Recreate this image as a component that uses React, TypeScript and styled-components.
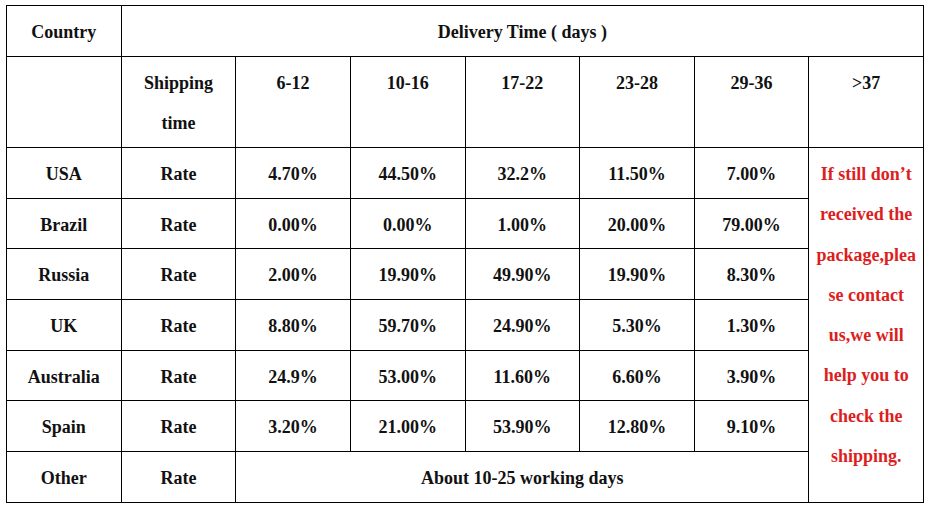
import React from "react";
import styled, { createGlobalStyle } from "styled-components";

const Global = createGlobalStyle`
  html, body { margin: 0; padding: 0; background: #fff; }
  body { padding: 5px 0 0 6px; }
`;

const Grid = styled.div`
  box-sizing: border-box;
  width: 918px;
  display: grid;
  grid-template-columns: repeat(8, 1fr);
  grid-template-rows: 51px 91px repeat(7, 50.7px);
  border-left: 1px solid #000;
  border-top: 1px solid #000;
  font-family: "Liberation Serif", "Times New Roman", serif;
  font-weight: 700;
  font-size: 18px;
  color: #111;
`;

const Cell = styled.div<{ $span?: number; $top?: boolean }>`
  box-sizing: border-box;
  border-right: 1px solid #000;
  border-bottom: 1px solid #000;
  grid-column: span ${(p) => p.$span ?? 1};
  display: flex;
  flex-direction: column;
  align-items: center;
  justify-content: ${(p) => (p.$top ? "flex-start" : "center")};
  padding-top: ${(p) => (p.$top ? "6px" : "3px")};
  line-height: ${(p) => (p.$top ? "40px" : "normal")};
  text-align: center;
  white-space: nowrap;
`;

const NoteCell = styled.div`
  box-sizing: border-box;
  border-right: 1px solid #000;
  border-bottom: 1px solid #000;
  grid-column: 8;
  grid-row: 3 / span 7;
  display: flex;
  flex-direction: column;
  align-items: center;
  padding-top: 6px;
  line-height: 40.3px;
  color: #dc1e1e;
  white-space: nowrap;
`;

const rows: [string, string[]][] = [
  ["USA", ["4.70%", "44.50%", "32.2%", "11.50%", "7.00%"]],
  ["Brazil", ["0.00%", "0.00%", "1.00%", "20.00%", "79.00%"]],
  ["Russia", ["2.00%", "19.90%", "49.90%", "19.90%", "8.30%"]],
  ["UK", ["8.80%", "59.70%", "24.90%", "5.30%", "1.30%"]],
  ["Australia", ["24.9%", "53.00%", "11.60%", "6.60%", "3.90%"]],
  ["Spain", ["3.20%", "21.00%", "53.90%", "12.80%", "9.10%"]],
];

const ranges = ["6-12", "10-16", "17-22", "23-28", "29-36", ">37"];

const note = [
  "If still don’t",
  "received the",
  "package,plea",
  "se contact",
  "us,we will",
  "help you to",
  "check the",
  "shipping.",
];

export default function App() {
  return (
    <>
      <Global />
      <Grid>
        <Cell>Country</Cell>
        <Cell $span={7}>Delivery Time ( days )</Cell>

        <Cell />
        <Cell $top>
          <span>Shipping</span>
          <span>time</span>
        </Cell>
        {ranges.map((r) => (
          <Cell key={r} $top>
            {r}
          </Cell>
        ))}

        {rows.map(([country, vals], i) => (
          <React.Fragment key={country}>
            <Cell>{country}</Cell>
            <Cell>Rate</Cell>
            {vals.map((v, j) => (
              <Cell key={j}>{v}</Cell>
            ))}
            {i === 0 && (
              <NoteCell>
                {note.map((l) => (
                  <span key={l}>{l}</span>
                ))}
              </NoteCell>
            )}
          </React.Fragment>
        ))}

        <Cell>Other</Cell>
        <Cell>Rate</Cell>
        <Cell $span={5}>About 10-25 working days</Cell>
      </Grid>
    </>
  );
}
